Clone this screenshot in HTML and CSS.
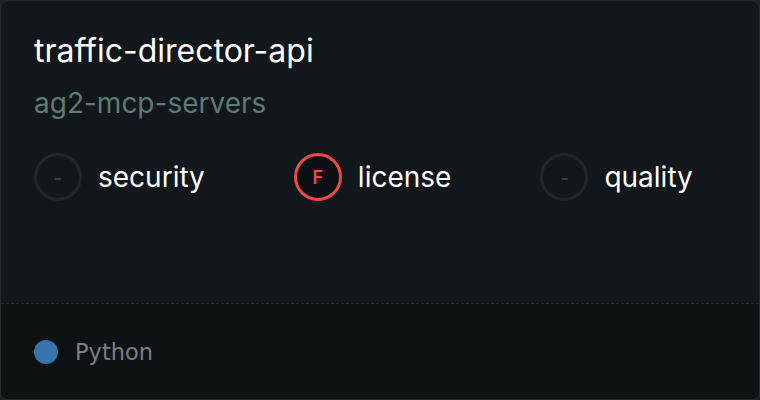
FILE: index.html
```html
<!DOCTYPE html>
<html>
<head>
<meta charset="utf-8">
<link rel="stylesheet" href="styles.css">
</head>
<body>
<div class="card">
  <div class="main">
    <div class="title">traffic-director-api</div>
    <div class="subtitle">ag2-mcp-servers</div>
    <div class="scores">
      <div class="score">
        <div class="badge badge-none">-</div>
        <span class="label">security</span>
      </div>
      <div class="score">
        <div class="badge badge-f">F</div>
        <span class="label">license</span>
      </div>
      <div class="score">
        <div class="badge badge-none">-</div>
        <span class="label">quality</span>
      </div>
    </div>
  </div>
  <div class="footer">
    <span class="lang-dot"></span>
    <span class="lang">Python</span>
  </div>
</div>
</body>
</html>
```

FILE: styles.css
```css
html, body {
  margin: 0;
  padding: 0;
  background: #1c2225;
}
.card {
  width: 760px;
  height: 400px;
  box-sizing: border-box;
  border: 1px solid #262c30;
  border-radius: 8px;
  background: #11171a;
  display: flex;
  flex-direction: column;
  overflow: hidden;
  font-family: Inter, "Liberation Sans", sans-serif;
}
.main {
  flex: 1;
  padding: 30px 33px 0;
}
.title {
  font-size: 32px;
  line-height: 40px;
  color: #ffffff;
}
.subtitle {
  margin-top: 15px;
  font-size: 28px;
  line-height: 34px;
  color: #5d7a74;
}
.scores {
  margin-top: 33px;
  display: flex;
  gap: 89px;
}
.score {
  display: flex;
  align-items: center;
  gap: 16px;
}
.badge {
  width: 48px;
  height: 48px;
  box-sizing: border-box;
  border-radius: 50%;
  display: flex;
  align-items: center;
  justify-content: center;
  font-size: 18px;
  font-weight: 600;
}
.badge-none {
  border: 3px solid #212729;
  color: #3a4043;
}
.badge-f {
  border: 3px solid #f04848;
  color: #f04848;
  background: #0c1013;
}
.label {
  font-size: 28px;
  line-height: 34px;
  color: #ffffff;
}
.footer {
  height: 96px;
  box-sizing: border-box;
  border-top: 1px dashed #262c30;
  background: #0d1215;
  display: flex;
  align-items: center;
  padding: 0 33px;
  gap: 17px;
}
.lang-dot {
  width: 24px;
  height: 24px;
  border-radius: 50%;
  background: #3674ab;
}
.lang {
  font-family: "DejaVu Sans", sans-serif;
  font-size: 22.5px;
  color: #7a7f82;
}
```
